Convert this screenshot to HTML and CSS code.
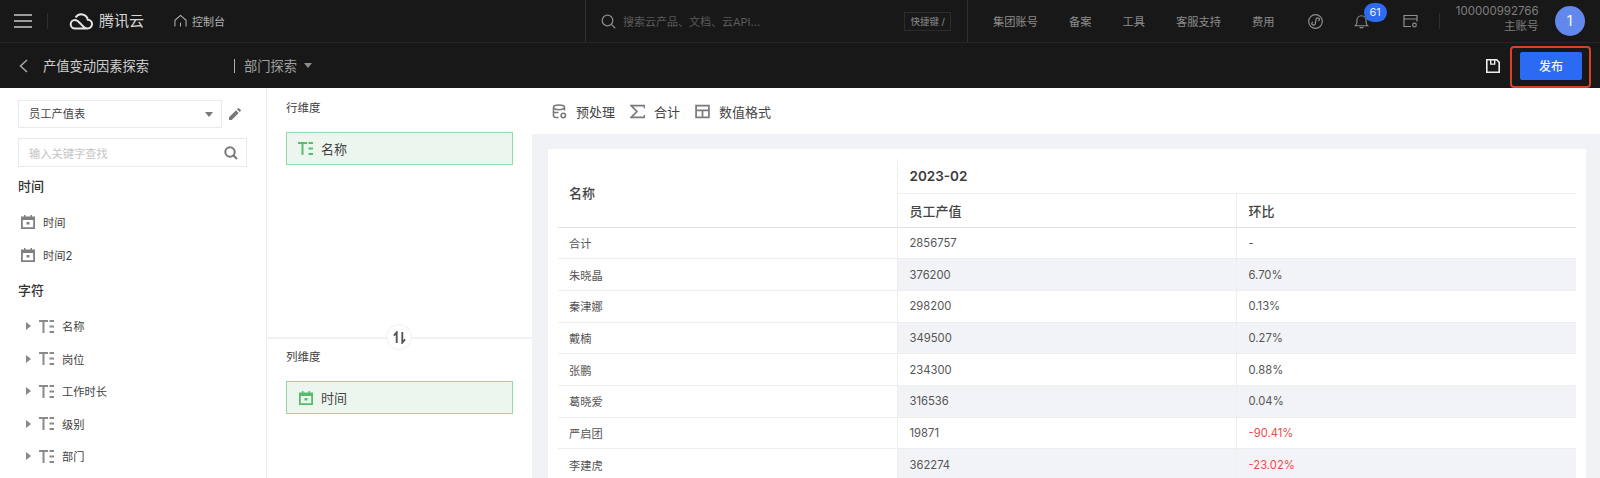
FILE: index.html
```html
<!DOCTYPE html>
<html lang="zh-CN">
<head>
<meta charset="utf-8">
<title>产值变动因素探索</title>
<link rel="stylesheet" href="styles.css">
</head>
<body>
<div class="app">
  <header class="topbar">
    <div class="top-left">
      <svg class="burger" viewBox="0 0 18 14"><path d="M0 1h18M0 7h18M0 13h18"/></svg>
      <span class="top-sep"></span>
      <svg class="cloud" viewBox="0 0 26 18"><path d="M7 16.500h12.500a4.400 4.400 0 0 0 .3-8.800A6.600 6.600 0 0 0 7.600 5.600M7 16.500a4.300 4.300 0 1 1 0-8.600c2.600 0 4 2 6 4.300s3.300 4.300 6.500 4.300"/></svg>
      <span class="brand">腾讯云</span>
      <svg class="home" viewBox="0 0 14 14"><path d="M1 13V6.200L7 1l6 5.200V13M7 9v4"/></svg>
      <span class="console">控制台</span>
    </div>
    <div class="top-search">
      <svg class="search-ic" viewBox="0 0 15 15"><circle cx="6.500" cy="6.500" r="5.300"/><path d="M10.400 10.400L14.200 14.200"/></svg>
      <span class="search-ph">搜索云产品、文档、云API...</span>
      <span class="kbd">快捷键 /</span>
    </div>
    <nav class="top-nav">
      <a>集团账号</a><a>备案</a><a>工具</a><a>客服支持</a><a>费用</a>
      <svg class="nav-ic circle-ic" viewBox="0 0 15 15"><circle cx="7.500" cy="7.500" r="6.800"/><path d="M11 4.300c-1.500-.8-2.900-.2-3.100 1.500l-.5 3.500c-.2 1.600-1.800 2.200-3.100 1.300-1-.7-.6-2.300.8-2.500M11 4.300c.9.700.4 2.300-.9 2.400"/></svg>
      <span class="bell-wrap">
        <svg class="nav-ic" viewBox="0 0 15 16"><path d="M1 12.500c1.200-1 1.600-2 1.600-4V6.800a4.900 4.900 0 0 1 9.800 0v1.700c0 2 .4 3 1.600 4zM5.500 14.500h4"/></svg>
        <span class="badge">61</span>
      </span>
      <svg class="nav-ic ticket-ic" viewBox="0 0 15 14"><path d="M8 12H1V1h13v6M1 4.500h13"/><circle cx="11.500" cy="10.500" r="1.800"/></svg>
      <span class="nav-sep"></span>
      <div class="account"><div>100000992766</div><div>主账号</div></div>
      <span class="avatar">1</span>
    </nav>
  </header>

  <div class="subbar">
    <svg class="back" viewBox="0 0 9 14"><path d="M8 1L1.500 7 8 13"/></svg>
    <span class="page-title">产值变动因素探索</span>
    <span class="crumb-bar"></span>
    <span class="crumb">部门探索</span>
    <span class="crumb-caret"></span>
    <svg class="save" viewBox="0 0 14 14"><path fill-rule="evenodd" class="save-body" d="M0 0h11l3 3v11H0zM1.600 1.600v10.800h10.800V3.700L10.300 1.600H9.400V5.800H4V1.600zM5.400 1.600v2.800h2.600V1.600z"/></svg>
    <div class="publish-wrap"><button class="publish">发布</button><span class="highlight"></span></div>
  </div>

  <main class="main">
    <aside class="fields">
      <div class="select-row">
        <div class="select">员工产值表<span class="select-caret"></span></div>
        <svg class="pencil" viewBox="0 0 12 12"><path d="M0 12V9.300L7 2.300 9.700 5 2.700 12zM8 1.300L9.200.1a.4.4 0 0 1 .5 0l2.200 2.200a.4.4 0 0 1 0 .5L10.700 4z"/></svg>
      </div>
      <div class="field-search">
        <span>输入关键字查找</span>
        <svg viewBox="0 0 14 14"><circle cx="6" cy="6" r="4.700"/><path d="M9.500 9.500L13 13"/></svg>
      </div>
      <h3 class="group-title">时间</h3>
      <div class="field-row date"><svg class="i-cal" viewBox="0 0 14 14"><use href="#cal"/></svg><span>时间</span></div>
      <div class="field-row date"><svg class="i-cal" viewBox="0 0 14 14"><use href="#cal"/></svg><span>时间2</span></div>
      <h3 class="group-title second">字符</h3>
      <div class="field-row text"><i class="tri"></i><svg class="i-t" viewBox="0 0 15 13"><use href="#te"/></svg><span>名称</span></div>
      <div class="field-row text"><i class="tri"></i><svg class="i-t" viewBox="0 0 15 13"><use href="#te"/></svg><span>岗位</span></div>
      <div class="field-row text"><i class="tri"></i><svg class="i-t" viewBox="0 0 15 13"><use href="#te"/></svg><span>工作时长</span></div>
      <div class="field-row text"><i class="tri"></i><svg class="i-t" viewBox="0 0 15 13"><use href="#te"/></svg><span>级别</span></div>
      <div class="field-row text"><i class="tri"></i><svg class="i-t" viewBox="0 0 15 13"><use href="#te"/></svg><span>部门</span></div>
    </aside>

    <section class="dims">
      <div class="dim-zone rows">
        <div class="dim-label">行维度</div>
        <div class="chip"><svg class="i-t green" viewBox="0 0 15 13"><use href="#te"/></svg><span>名称</span></div>
      </div>
      <div class="swap"><svg viewBox="0 0 14 14"><path d="M4 13V1.500L1 5M10 1v11.500L13 9"/></svg></div>
      <div class="dim-zone cols">
        <div class="dim-label">列维度</div>
        <div class="chip"><svg class="i-cal green" viewBox="0 0 14 14"><use href="#cal"/></svg><span>时间</span></div>
      </div>
    </section>

    <section class="content">
      <div class="toolbar">
        <button class="tool"><svg viewBox="0 0 14 15"><path d="M6 13.500H3.500C2 13.500 1 12.800 1 11.500V3.500C1 2 3.500 1 6.500 1S12 2 12 3.500V6.500M1 4c1 1.200 3.200 1.700 5.500 1.700S11 5.200 12 4M1 8.500h5"/><circle cx="10.800" cy="11.500" r="2.200"/></svg>预处理</button>
        <button class="tool"><svg viewBox="0 0 14 13"><path d="M13.500 3.500V1H1l5.500 5.500L1 12h12.500V9.800"/></svg>合计</button>
        <button class="tool"><svg viewBox="0 0 14 13"><path d="M1 1h12v11H1zM1 5.500h12M7 5.500V12"/></svg>数值格式</button>
      </div>
      <div class="canvas">
        <div class="card">
          <table class="pivot">
            <colgroup><col class="c1"><col class="c2"><col class="c3"></colgroup>
            <thead>
              <tr class="h1"><th rowspan="2" class="name-head">名称</th><th colspan="2" class="period">2023-02</th></tr>
              <tr class="h2"><th>员工产值</th><th>环比</th></tr>
            </thead>
            <tbody>
              <tr><td>合计</td><td>2856757</td><td>-</td></tr>
              <tr class="alt"><td>朱晓晶</td><td>376200</td><td>6.70%</td></tr>
              <tr><td>秦津娜</td><td>298200</td><td>0.13%</td></tr>
              <tr class="alt"><td>戴楠</td><td>349500</td><td>0.27%</td></tr>
              <tr><td>张鹏</td><td>234300</td><td>0.88%</td></tr>
              <tr class="alt"><td>葛晓爱</td><td>316536</td><td>0.04%</td></tr>
              <tr><td>严启团</td><td>19871</td><td class="neg">-90.41%</td></tr>
              <tr class="alt"><td>李建虎</td><td>362274</td><td class="neg">-23.02%</td></tr>
            </tbody>
          </table>
        </div>
      </div>
    </section>
  </main>
</div>

<svg class="defs" aria-hidden="true">
  <symbol id="cal" viewBox="0 0 14 14"><path fill-rule="evenodd" d="M3 0h1.500v1.500h5V0H11v1.500h3V14H0V1.500h3zM1.800 5v7.200h10.400V5zM5.500 7h3v2.500h-3z"/></symbol>
  <symbol id="te" viewBox="0 0 15 13"><path d="M0 0h9v2H5.500v11h-2V2H0zM10.500 0H15v2h-4.500zM10.500 5.500H15v2h-4.500zM10.500 11H15v2h-4.500z"/></symbol>
</svg>
</body>
</html>
```

FILE: styles.css
```css
* { box-sizing: border-box; }
html, body { margin: 0; height: 478px; overflow: hidden; background: #fff; }
body { font-family: Inter, "Noto Sans CJK SC", "Noto Sans", sans-serif; color: #333; }
svg { flex: none; display: block; }
.defs { width: 0; height: 0; position: absolute; }
.app { display: flex; flex-direction: column; height: 478px; }

/* top bar */
.topbar { display: flex; height: 43px; background: #181818; border-bottom: 1px solid #262626; color: #8c8c8c; font-size: 11.250px; flex: none; }
.top-left { display: flex; align-items: center; flex: none; width: 585px; padding-left: 14px; }
.burger { width: 18px; height: 14px; fill: none; stroke: #c8c8c8; stroke-width: 1.500; }
.top-sep { width: 1px; height: 16px; background: #2e2e2e; margin-left: 15px; }
.cloud { width: 26px; height: 18px; margin-left: 20px; fill: none; stroke: #e4e4e4; stroke-width: 2; }
.brand { font-size: 15px; color: #d4d4d4; margin-left: 5px; line-height: 20px; }
.home { width: 13px; height: 14px; margin-left: 30px; fill: none; stroke: #b4b4b4; stroke-width: 1.100; }
.console { font-size: 11px; color: #b0b0b0; margin-left: 5px; }
.top-search { display: flex; align-items: center; flex: none; width: 383px; border-left: 1px solid #303030; border-right: 1px solid #303030; padding: 0 16px 0 15px; }
.search-ic { width: 15px; height: 15px; fill: none; stroke: #8a8a8a; stroke-width: 1.300; }
.search-ph { font-size: 11px; color: #5a5a5a; margin-left: 7px; flex: 1; }
.kbd { font-size: 9.500px; line-height: 17px; border: 1px solid #2c2c2c; padding: 0 5px; color: #8a8a8a; height: 19px; white-space: nowrap; }
.top-nav { display: flex; align-items: center; flex: 1; min-width: 0; padding-left: 25px; }
.top-nav a { margin-right: 31px; white-space: nowrap; flex: none; }
.nav-ic { width: 15px; height: 15px; fill: none; stroke: #8e8e8e; stroke-width: 1.200; }
.circle-ic { margin-left: 2px; }
.bell-wrap { position: relative; margin-left: 31px; flex: none; }
.badge { position: absolute; left: 10px; top: -11px; width: 23px; height: 19px; border-radius: 10px; background: #2d6cf0; color: #e8eefc; font-size: 11px; line-height: 19px; text-align: center; }
.ticket-ic { margin-left: 34px; }
.nav-sep { width: 1px; height: 16px; background: #2e2e2e; margin-left: 21px; flex: none; }
.account { width: 84px; flex: none; margin-left: 15px; padding-bottom: 4px; text-align: right; font-size: 11.500px; line-height: 15.500px; color: #7e7e7e; white-space: nowrap; }
.avatar { width: 30px; height: 30px; flex: none; border-radius: 50%; background: #6288ee; color: #f4f6fe; margin-left: 16px; font-size: 14px; line-height: 30px; text-align: center; }

/* sub bar */
.subbar { display: flex; align-items: center; height: 45px; background: #181818; color: #cfcfcf; font-size: 13.250px; padding-left: 19px; flex: none; }
.back { width: 9px; height: 14px; fill: none; stroke: #a8a8a8; stroke-width: 1.500; }
.page-title { margin-left: 15px; width: 191px; white-space: nowrap; }
.crumb-bar { width: 1px; height: 14px; background: #b0b0b0; }
.crumb { margin-left: 9px; color: #a0a0a0; }
.crumb-caret { width: 0; height: 0; margin-left: 7px; border: 4px solid transparent; border-top: 5px solid #8e8e8e; border-bottom: 0; }
.save { width: 14px; height: 14px; margin-left: auto; }
.save-body { fill: #eee; }
.publish-wrap { position: relative; margin: 0 18px 0 20px; }
.publish { display: block; width: 62px; height: 28px; border: 0; border-radius: 2px; background: #2b6bf3; color: #f2f5fe; font: 500 12px Inter, "Noto Sans CJK SC", sans-serif; }
.highlight { position: absolute; left: -10px; top: -6px; width: 81px; height: 42px; border: 2px solid #dd3f28; border-radius: 4px; }

/* layout */
.main { display: flex; flex: 1; min-height: 0; }

/* field list */
.fields { width: 267px; flex: none; border-right: 1px solid #eeeef1; padding: 12px 18px 0 18px; font-size: 11.250px; color: #3e3e3e; }
.select-row { display: flex; align-items: center; }
.select { position: relative; width: 204px; height: 28px; border: 1px solid #e9e9ee; padding-left: 10px; line-height: 26px; color: #444; }
.select-caret { position: absolute; right: 8px; top: 11px; border: 4px solid transparent; border-top: 5px solid #777; border-bottom: 0; }
.pencil { width: 12px; height: 12px; margin-left: 7px; fill: #777; }
.field-search { display: flex; align-items: center; justify-content: space-between; width: 229px; height: 29px; margin-top: 10px; border: 1px solid #e9e9ee; padding: 0 8px 0 10px; color: #c4c4c4; }
.field-search svg { width: 14px; height: 14px; fill: none; stroke: #777; stroke-width: 2; }
.group-title { margin: 3px 0 4px; height: 32px; line-height: 32px; font-size: 13px; font-weight: 500; color: #333; }
.field-row { display: flex; align-items: center; height: 32.500px; }
.field-row.date { padding-left: 3px; }
.field-row.date span { margin-left: 8px; }
.i-cal { width: 14px; height: 14px; fill: #808080; }
.field-row.text { padding-left: 8px; }
.tri { width: 0; height: 0; border: 4px solid transparent; border-left: 5px solid #888; border-right: 0; }
.i-t { width: 15px; height: 13px; margin-left: 8px; fill: #8a8a8a; }
.field-row.text span { margin-left: 8px; }

/* dimensions */
.dims { position: relative; width: 265px; flex: none; }
.dim-zone { padding: 10px 19px 0; font-size: 11.500px; color: #3e3e3e; }
.dim-zone.rows { height: 251px; border-bottom: 2px solid #f1f1f4; }
.dim-zone.cols { padding-top: 8px; }
.dim-label { height: 20px; line-height: 20px; }
.chip { display: flex; align-items: center; height: 33px; margin-top: 14px; background: #edf6ee; border: 1px solid #97d9a4; padding-left: 11px; font-size: 13px; color: #444; }
.chip span { margin-left: 8px; }
.chip .i-t { margin-left: 0; }
.chip .i-cal { margin: 0 0 0 1px; }
.green { fill: #55bd6c; }
.swap { position: absolute; left: 119px; top: 236px; width: 26px; height: 26px; border-radius: 50%; background: #fff; border: 1px solid #f0f0f2; display: flex; align-items: center; justify-content: center; }
.swap svg { width: 13px; height: 13px; fill: none; stroke: #555; stroke-width: 2; }

/* content */
.content { flex: 1; min-width: 0; display: flex; flex-direction: column; }
.toolbar { display: flex; align-items: center; height: 46px; padding-left: 20px; background: #fff; flex: none; }
.tool { display: flex; align-items: center; height: 46px; margin-right: 15px; padding: 0; border: 0; background: none; font: 13px Inter, "Noto Sans CJK SC", sans-serif; color: #444; }
.tool svg { width: 15px; height: 15px; margin-right: 9px; fill: none; stroke: #7a7a7a; stroke-width: 1.600; }
.canvas { flex: 1; min-height: 0; background: #f1f2f6; padding: 15px 14px 0 16px; overflow: hidden; }
.card { height: 400px; background: #fff; padding: 10px 10px 0; overflow: hidden; }
.pivot { width: 1018px; border-collapse: collapse; table-layout: fixed; font-size: 11.250px; color: #555; }
.c1 { width: 339px; }
.c2 { width: 339px; }
.c3 { width: 340px; }
.pivot th { text-align: left; font-weight: 500; font-size: 13px; color: #444; padding: 0 0 0 12px; border-left: 1px solid #eeeef0; }
.pivot th:first-child { border-left: 0; padding-left: 11px; }
.pivot .h1 { height: 34px; }
.pivot .h2 { height: 34px; }
.pivot .h2 th { border-top: 1px solid #eeeef0; }
.pivot .h2 th:first-child { border-left: 1px solid #eeeef0; padding-left: 12px; }
.pivot .name-head { border-left: 0; }
.pivot .period { font-weight: 600; font-size: 13.500px; color: #3c3c3c; }
.pivot thead { border-bottom: 1px solid #e2e2e4; }
.pivot tbody tr { height: 31.710px; border-bottom: 1px solid #eeeef0; }
.pivot td { padding: 0 0 0 12px; border-left: 1px solid #eeeef0; white-space: nowrap; }
.pivot td:first-child { border-left: 0; padding-left: 11px; }
.alt td { background: #f2f3f7; }
.alt td:first-child { background: #fff; }
.pivot td.neg { color: #ef4b4b; }
```
